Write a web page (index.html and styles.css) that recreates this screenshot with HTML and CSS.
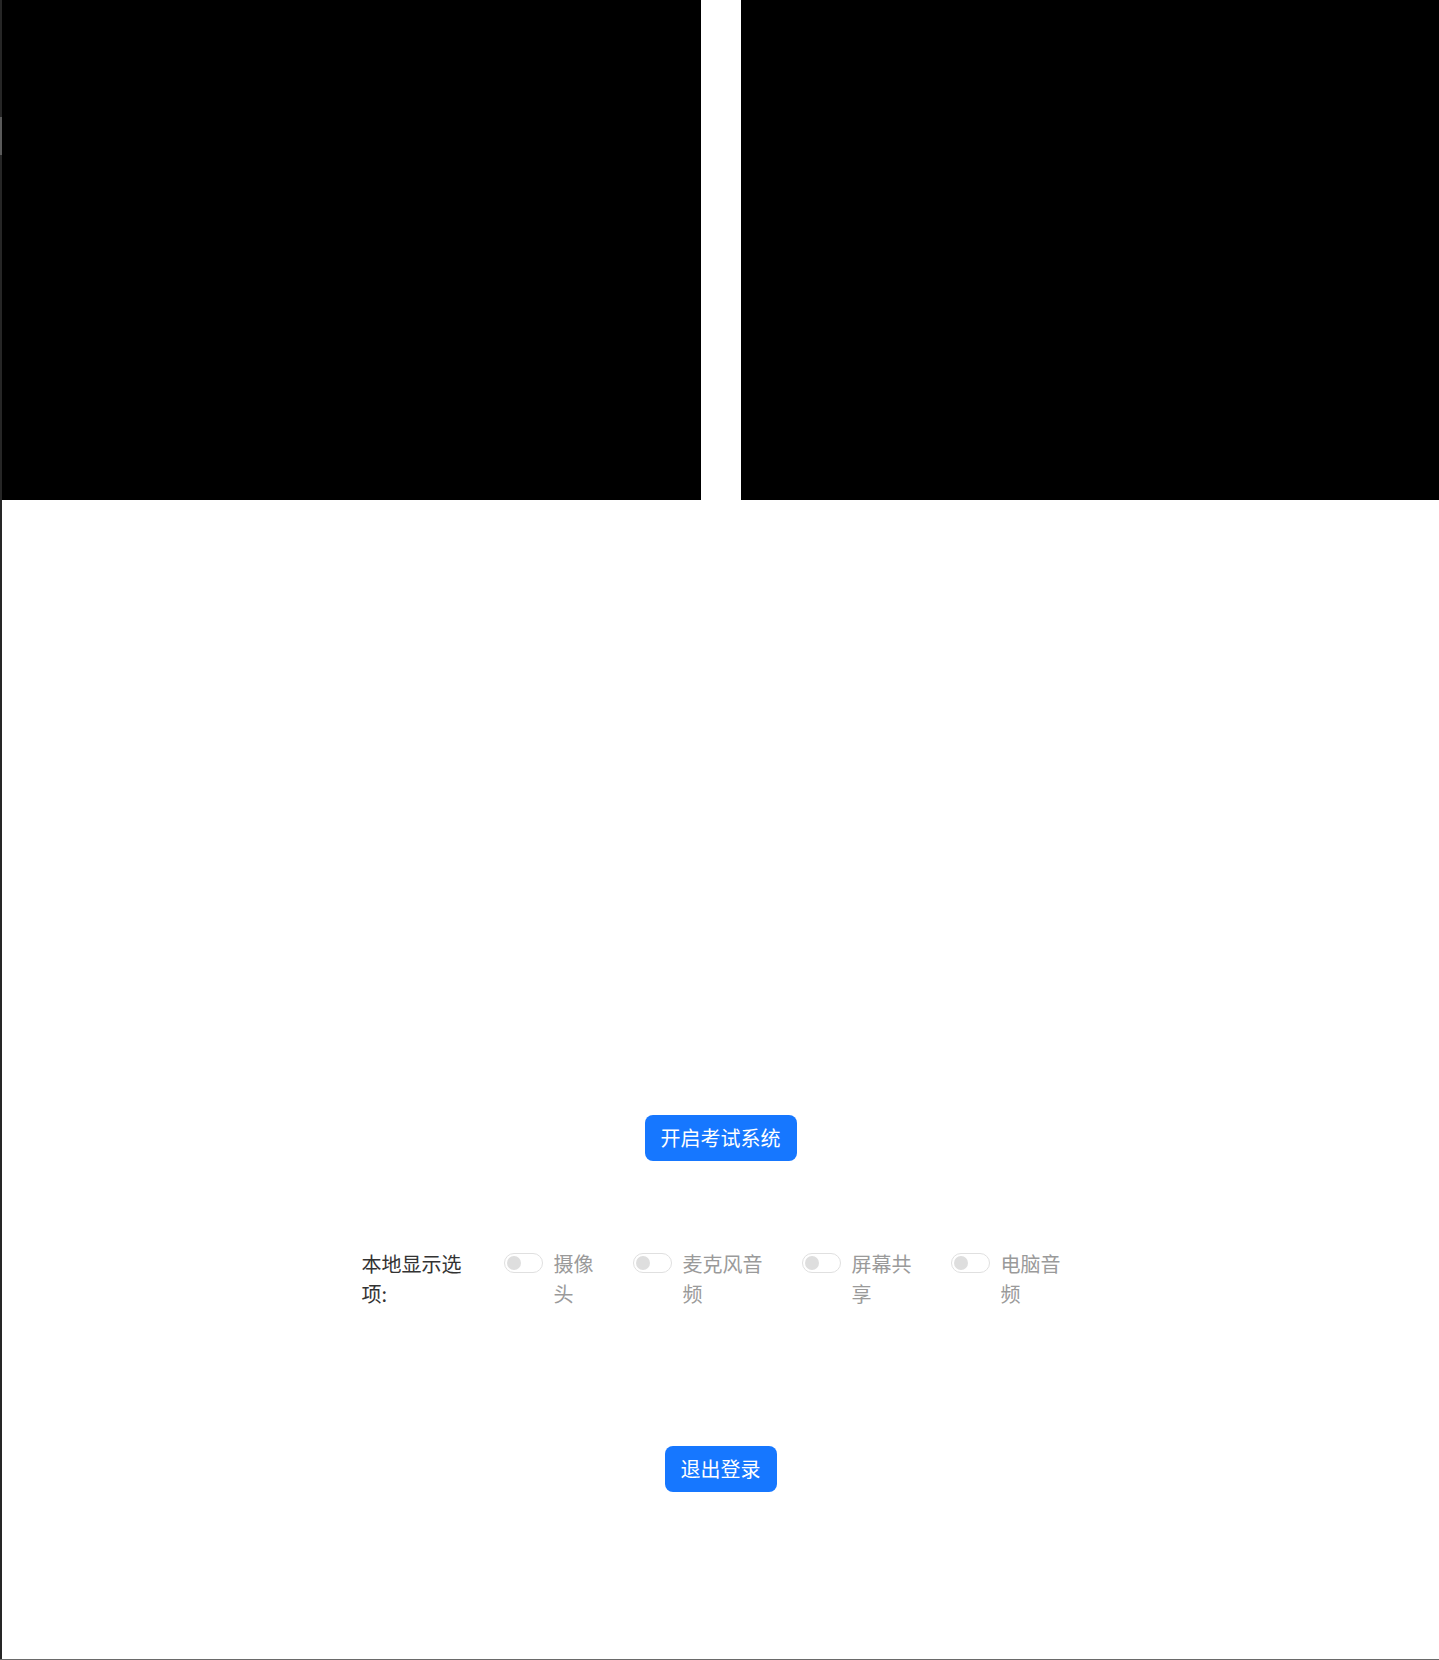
FILE: index.html
```html
<!DOCTYPE html>
<html lang="zh">
<head>
<meta charset="utf-8">
<title>考试系统</title>
<link rel="stylesheet" href="styles.css">
</head>
<body>
<div class="frame">
  <div class="edge"><div class="edge-thumb"></div></div>
  <main class="page">
    <section class="videos">
      <div class="video"></div>
      <div class="video"></div>
    </section>
    <div class="actions first">
      <button class="btn">开启考试系统</button>
    </div>
    <div class="options">
      <div class="opt-label">本地显示选项:</div>
      <label class="opt">
        <span class="switch"><span class="knob"></span></span>
        <span class="opt-text w2">摄像头</span>
      </label>
      <label class="opt">
        <span class="switch"><span class="knob"></span></span>
        <span class="opt-text w4">麦克风音频</span>
      </label>
      <label class="opt">
        <span class="switch"><span class="knob"></span></span>
        <span class="opt-text w3">屏幕共享</span>
      </label>
      <label class="opt">
        <span class="switch"><span class="knob"></span></span>
        <span class="opt-text w3">电脑音频</span>
      </label>
    </div>
    <div class="actions last">
      <button class="btn">退出登录</button>
    </div>
  </main>
</div>
</body>
</html>
```

FILE: styles.css
```css
html, body {
  margin: 0;
  padding: 0;
  background: #ffffff;
}

body {
  font-family: "Noto Sans CJK SC", "Noto Sans", sans-serif;
}

.frame {
  display: flex;
  height: 1660px;
  box-sizing: border-box;
  border-bottom: 1px solid #6a6a6a;
  overflow: hidden;
}

.edge {
  width: 2px;
  flex: none;
  background: #262626;
}

.edge-thumb {
  margin-top: 117px;
  height: 38px;
  background: #5a5a5a;
}

.page {
  flex: 1;
  display: flex;
  flex-direction: column;
}

.videos {
  display: grid;
  grid-template-columns: 699px 1fr;
  column-gap: 40px;
  height: 500px;
}

.video {
  background: #000000;
}

.actions {
  display: flex;
  justify-content: center;
}

.actions.first {
  margin-top: 615px;
}

.actions.last {
  margin-top: 137px;
}

.btn {
  font-family: "Noto Sans CJK SC", "Noto Sans", sans-serif;
  font-size: 20px;
  line-height: 28px;
  color: #ffffff;
  background: #1677ff;
  border: none;
  border-radius: 8px;
  padding: 9px 16px;
  height: 46px;
  cursor: pointer;
}

.options {
  width: 720px;
  margin: 88px auto 0;
  display: flex;
  align-items: flex-start;
  font-size: 20px;
  line-height: 30px;
}

.opt-label {
  flex: none;
  width: 118px;
  color: #333333;
  margin-left: 1px;
  margin-right: 24px;
}

.opt {
  flex: none;
  display: flex;
  align-items: flex-start;
  margin-right: 39px;
}

.opt:last-child {
  margin-right: 0;
}

.switch {
  position: relative;
  width: 39px;
  height: 20px;
  box-sizing: border-box;
  margin-top: 4px;
  border: 1px solid #e0e0e0;
  border-radius: 10px;
  background: #ffffff;
  flex: none;
}

.knob {
  position: absolute;
  left: 2px;
  top: 2px;
  width: 14px;
  height: 14px;
  border-radius: 50%;
  background: #dedede;
}

.opt-text {
  flex: none;
  margin-left: 11px;
  color: #9a9a9a;
}

.w2 { width: 40px; }
.w3 { width: 60px; }
.w4 { width: 80px; }
```
